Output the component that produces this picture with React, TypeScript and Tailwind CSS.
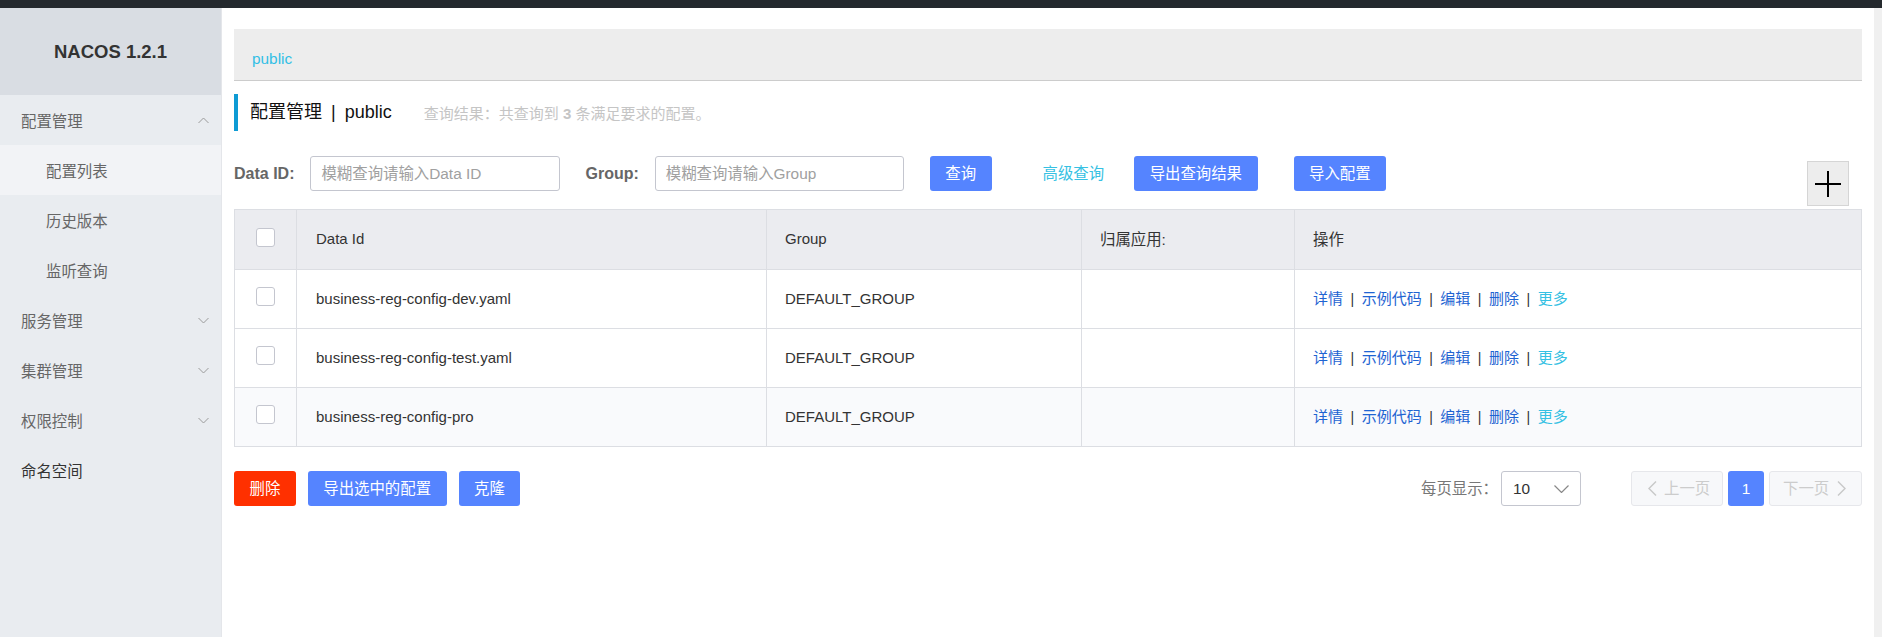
import React from 'react';

const FONT = { fontFamily: '"Liberation Sans", "Noto Sans CJK SC", sans-serif' };

const rows = [
    { id: 'business-reg-config-dev.yaml', group: 'DEFAULT_GROUP', app: '' },
    { id: 'business-reg-config-test.yaml', group: 'DEFAULT_GROUP', app: '' },
    { id: 'business-reg-config-pro', group: 'DEFAULT_GROUP', app: '' },
];

const Chevron = ({ up }: { up?: boolean }) => (
    <svg width="11" height="7" viewBox="0 0 11 7" className="shrink-0">
        <polyline
            points={up ? '0.5,6 5.5,1 10.5,6' : '0.5,1 5.5,6 10.5,1'}
            fill="none"
            stroke="#9a9a9a"
            strokeWidth="1"
        />
    </svg>
);

const MenuItem = ({
    label,
    sub,
    active,
    chevron,
    dark,
}: {
    label: string;
    sub?: boolean;
    active?: boolean;
    chevron?: 'up' | 'down';
    dark?: boolean;
}) => (
    <div
        className={`h-[50px] flex items-center justify-between pr-[12px] text-[15.4px] ${
            sub ? 'pl-[46px]' : 'pl-[21px]'
        } ${active ? 'bg-[#f2f3f6]' : ''} ${dark ? 'text-[#333]' : 'text-[#666]'}`}
    >
        <span className="pt-[4px]">{label}</span>
        {chevron && <Chevron up={chevron === 'up'} />}
    </div>
);

const Checkbox = () => (
    <div className="w-[19px] h-[19px] rounded-[3px] border border-[#c4c6cf] bg-white mb-[5px]" />
);

const Sep = () => <span className="mx-[7.5px] text-[#333] text-[14px]">|</span>;

const Actions = () => (
    <div className="flex items-center text-[15px] text-[#1e64d2]">
        <span>详情</span>
        <Sep />
        <span>示例代码</span>
        <Sep />
        <span>编辑</span>
        <Sep />
        <span>删除</span>
        <Sep />
        <span className="text-[#36c1e3]">更多</span>
    </div>
);

const PrimaryButton = ({ children, red }: { children: React.ReactNode; red?: boolean }) => (
    <button
        className={`h-[35px] px-[15.5px] rounded-[3px] text-white text-[15.4px] flex items-center ${
            red ? 'bg-[#ff3000]' : 'bg-[#5584ff]'
        }`}
    >
        {children}
    </button>
);

const App = () => {
    return (
        <div className="w-[1882px] h-[637px] flex flex-col bg-white overflow-hidden" style={FONT}>
            <div className="h-[8px] bg-[#24292e] shrink-0" />
            <div className="flex flex-1 min-h-0">
                <aside className="w-[221px] shrink-0 bg-[#e9ecf0] flex flex-col">
                    <div className="h-[87px] bg-[#d9dde3] flex items-center justify-center text-[18.5px] font-bold text-[#333]">
                        NACOS 1.2.1
                    </div>
                    <MenuItem label="配置管理" chevron="up" />
                    <MenuItem label="配置列表" sub active />
                    <MenuItem label="历史版本" sub />
                    <MenuItem label="监听查询" sub />
                    <MenuItem label="服务管理" chevron="down" />
                    <MenuItem label="集群管理" chevron="down" />
                    <MenuItem label="权限控制" chevron="down" />
                    <MenuItem label="命名空间" dark />
                </aside>

                <main className="flex-1 min-w-0 pl-[12px] pr-[12px] pt-[21px] border-l border-[#e4e6ea]">
                    <div className="h-[52px] bg-[#ededed] border-b border-[#cccccc] flex items-center pl-[18px] pt-[8px]">
                        <span className="text-[15.4px] text-[#33bfe5]">public</span>
                    </div>

                    <div className="mt-[13px] h-[37px] border-l-4 border-[#0e9bd4] flex items-center pl-[12px]">
                        <span className="text-[18px] text-[#111]">配置管理</span>
                        <span className="mx-[9px] text-[18px] text-[#111]">|</span>
                        <span className="text-[18px] text-[#111]">public</span>
                        <span className="ml-[32px] text-[15px] text-[#c5c5c5] pt-[3px]">
                            查询结果：共查询到 <b>3</b> 条满足要求的配置。
                        </span>
                    </div>

                    <div className="mt-[25px] h-[50px] flex items-start justify-between">
                        <div className="flex items-center h-[35px]">
                            <span className="text-[16px] font-bold text-[#666]">Data ID:</span>
                            <div className="ml-[16px] w-[250px] h-[35px] rounded-[3px] border border-[#c4c6cf] flex items-center pl-[10px] text-[15.4px] text-[#a0a0a0]">
                                模糊查询请输入Data ID
                            </div>
                            <span className="ml-[25px] text-[16px] font-bold text-[#666]">Group:</span>
                            <div className="ml-[16px] w-[249px] h-[35px] rounded-[3px] border border-[#c4c6cf] flex items-center pl-[10px] text-[15.4px] text-[#a0a0a0]">
                                模糊查询请输入Group
                            </div>
                            <div className="ml-[26px]">
                                <PrimaryButton>查询</PrimaryButton>
                            </div>
                            <span className="ml-[51px] text-[15.4px] text-[#36c1e3]">高级查询</span>
                            <div className="ml-[30px]">
                                <PrimaryButton>导出查询结果</PrimaryButton>
                            </div>
                            <div className="ml-[36px]">
                                <PrimaryButton>导入配置</PrimaryButton>
                            </div>
                        </div>
                        <div className="mt-[5px] mr-[13px] w-[42px] h-[45px] bg-[#ededed] border border-[#d5d5d5] flex items-center justify-center">
                            <svg width="26" height="26" viewBox="0 0 26 26">
                                <line x1="0" y1="13" x2="26" y2="13" stroke="#000" strokeWidth="2" />
                                <line x1="13" y1="0" x2="13" y2="26" stroke="#000" strokeWidth="2" />
                            </svg>
                        </div>
                    </div>

                    <div className="mt-[3px] border-t border-l border-r border-[#dcdee3] text-[15px] text-[#333]">
                        <div className="h-[60px] grid grid-cols-[62px_470px_315px_213px_1fr] bg-[#ebecf0] border-b border-[#dcdee3]">
                            <div className="border-r border-[#dcdee3] flex items-center justify-center">
                                <Checkbox />
                            </div>
                            <div className="border-r border-[#dcdee3] flex items-center pl-[19px]">Data Id</div>
                            <div className="border-r border-[#dcdee3] flex items-center pl-[18px]">Group</div>
                            <div className="border-r border-[#dcdee3] flex items-center pl-[18px] text-[15.4px]">归属应用:</div>
                            <div className="flex items-center pl-[18px] text-[15.4px]">操作</div>
                        </div>
                        {rows.map((r, i) => (
                            <div
                                key={r.id}
                                className={`h-[59px] grid grid-cols-[62px_470px_315px_213px_1fr] border-b border-[#dcdee3] ${
                                    i === 2 ? 'bg-[#f9fafc]' : 'bg-white'
                                }`}
                            >
                                <div className="border-r border-[#dcdee3] flex items-center justify-center">
                                    <Checkbox />
                                </div>
                                <div className="border-r border-[#dcdee3] flex items-center pl-[19px]">{r.id}</div>
                                <div className="border-r border-[#dcdee3] flex items-center pl-[18px]">{r.group}</div>
                                <div className="border-r border-[#dcdee3] flex items-center pl-[18px]">{r.app}</div>
                                <div className="flex items-center pl-[18px]">
                                    <Actions />
                                </div>
                            </div>
                        ))}
                    </div>

                    <div className="mt-[24px] flex items-center justify-between">
                        <div className="flex items-center gap-[12px]">
                            <PrimaryButton red>删除</PrimaryButton>
                            <PrimaryButton>导出选中的配置</PrimaryButton>
                            <PrimaryButton>克隆</PrimaryButton>
                        </div>
                        <div className="flex items-center">
                            <span className="text-[15.4px] text-[#777]">每页显示：</span>
                            <div className="ml-[3px] w-[80px] h-[35px] rounded-[3px] border border-[#c4c6cf] flex items-center justify-between pl-[11px] pr-[11px]">
                                <span className="text-[15.4px] text-[#333]">10</span>
                                <svg width="15" height="8" viewBox="0 0 15 8">
                                    <polyline points="0.5,0.5 7.5,7.5 14.5,0.5" fill="none" stroke="#888" strokeWidth="1.2" />
                                </svg>
                            </div>
                            <div className="ml-[50px] w-[92px] h-[35px] rounded-[3px] border border-[#e6e7eb] bg-[#f7f8fa] flex items-center pl-[16px] gap-[7px] text-[15.4px] text-[#ccc]">
                                <svg width="9" height="15" viewBox="0 0 9 15">
                                    <polyline points="8,0.5 1,7.5 8,14.5" fill="none" stroke="#c8c8c8" strokeWidth="1.4" />
                                </svg>
                                <span>上一页</span>
                            </div>
                            <div className="ml-[5px] w-[36px] h-[35px] rounded-[3px] bg-[#5584ff] flex items-center justify-center text-white text-[15.4px]">
                                1
                            </div>
                            <div className="ml-[5px] w-[93px] h-[35px] rounded-[3px] border border-[#e6e7eb] bg-[#f7f8fa] flex items-center pl-[13px] gap-[8px] text-[15.4px] text-[#ccc]">
                                <span>下一页</span>
                                <svg width="9" height="15" viewBox="0 0 9 15">
                                    <polyline points="1,0.5 8,7.5 1,14.5" fill="none" stroke="#c8c8c8" strokeWidth="1.4" />
                                </svg>
                            </div>
                        </div>
                    </div>
                </main>
                <div className="w-[8px] shrink-0 bg-[#f0f0f0]" />
            </div>
        </div>
    );
};

export default App;
